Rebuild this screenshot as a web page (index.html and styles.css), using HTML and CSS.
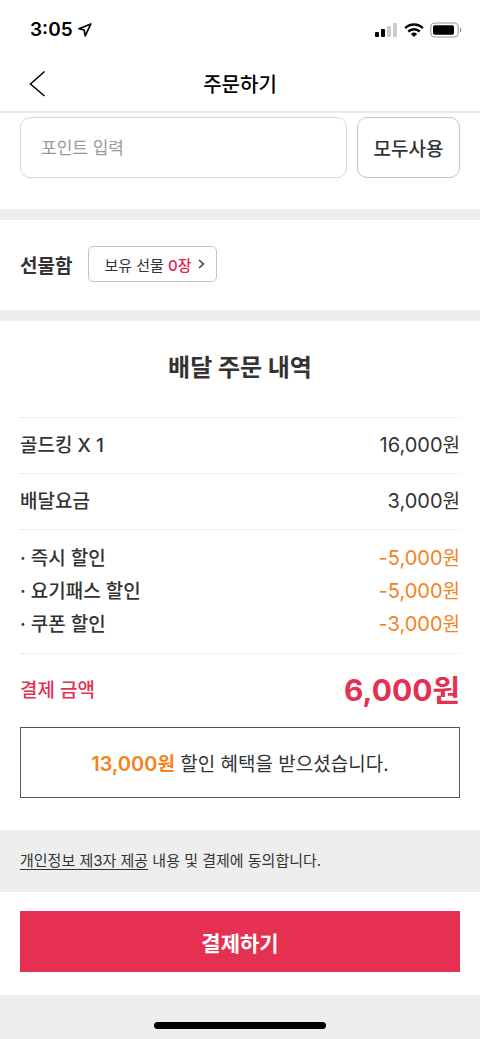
FILE: index.html
```html
<!DOCTYPE html>
<html lang="ko">
<head>
<meta charset="utf-8">
<meta name="viewport" content="width=device-width, initial-scale=1">
<title>주문하기</title>
<link rel="stylesheet" href="styles.css">
</head>
<body>
<div class="status">
  <div class="status-time">
    <span>3:05</span>
    <svg width="14" height="14" viewBox="0 0 14 14" aria-hidden="true"><path d="M1 5.700 12.800 1 7.200 12.800 6.200 7Z" fill="none" stroke="#000" stroke-width="1.700" stroke-linejoin="round"/></svg>
  </div>
  <div class="status-icons">
    <svg width="23" height="14" viewBox="0 0 23 14" aria-hidden="true"><rect x="0" y="9" width="4" height="5" rx="1"/><rect x="6" y="6" width="4" height="8" rx="1"/><rect x="12" y="3" width="4" height="11" rx="1" fill="#ccc"/><rect x="18" y="0" width="4" height="14" rx="1" fill="#ccc"/></svg>
    <svg width="20" height="14" viewBox="0 0 20 14" aria-hidden="true"><g fill="none" stroke="#000" stroke-width="2.500"><path d="M1.200 5.200a12.600 12.600 0 0 1 17.600 0"/><path d="M4.300 8.500a8.200 8.200 0 0 1 11.400 0"/></g><path d="M10 14 6.900 10.900a4.500 4.500 0 0 1 6.200 0Z"/></svg>
    <svg width="32" height="16" viewBox="0 0 32 16" aria-hidden="true"><rect x=".8" y="1" width="27.400" height="14" rx="4" fill="none" stroke="#999" stroke-width="1.100"/><rect x="3" y="3.200" width="21" height="9.600" rx="1.800"/><path d="M30 5.600c1.600.6 1.600 4.200 0 4.800Z" fill="#888"/></svg>
  </div>
</div>
<header class="header">
  <button class="back" type="button" aria-label="뒤로"><svg width="17" height="27" viewBox="0 0 17 27" aria-hidden="true"><path d="M15.500 1.500 1.500 14 15.500 26" fill="none" stroke="#000" stroke-width="1.500"/></svg></button>
  <h1 class="header-title">주문하기</h1>
</header>
<main>
  <section class="points">
    <input class="points-input" type="text" placeholder="포인트 입력" aria-label="포인트 입력">
    <button class="points-all" type="button">모두사용</button>
  </section>
  <section class="gifts">
    <h2 class="gifts-title">선물함</h2>
    <button class="gifts-button" type="button"><span>보유 선물 <b class="gifts-count">0장</b></span><svg width="7" height="10" viewBox="0 0 7 10" aria-hidden="true"><path d="M1 1 5.500 5 1 9" fill="none" stroke="#333" stroke-width="1.300"/></svg></button>
  </section>
  <section class="order">
    <h2 class="order-title">배달 주문 내역</h2>
    <dl class="lines">
      <div class="line"><dt>골드킹 X 1</dt><dd>16,000<span class="won">원</span></dd></div>
    </dl>
    <dl class="lines">
      <div class="line"><dt>배달요금</dt><dd>3,000<span class="won">원</span></dd></div>
    </dl>
    <dl class="lines discounts">
      <div class="line"><dt>· 즉시 할인</dt><dd>-5,000<span class="won">원</span></dd></div>
      <div class="line"><dt>· 요기패스 할인</dt><dd>-5,000<span class="won">원</span></dd></div>
      <div class="line"><dt>· 쿠폰 할인</dt><dd>-3,000<span class="won">원</span></dd></div>
    </dl>
    <dl class="lines total">
      <div class="line"><dt>결제 금액</dt><dd>6,000원</dd></div>
    </dl>
    <p class="benefit"><span><b class="benefit-sum">13,000<span class="won">원</span></b> 할인 혜택을 받으셨습니다.</span></p>
  </section>
  <p class="agree"><a class="agree-link" href="#">개인정보 제3자 제공</a> 내용 및 결제에 동의합니다.</p>
  <div class="pay"><button class="pay-button" type="button">결제하기</button></div>
</main>
<footer class="home"><div class="home-bar"></div></footer>
</body>
</html>
```
FILE: styles.css
```css
* { box-sizing: border-box; }
body, h1, h2, p, dl, dd { margin: 0; }
body {
  min-height: 100vh;
  display: flex;
  flex-direction: column;
  background: #fff;
  color: #333;
  font-family: Inter, "Noto Sans CJK KR", sans-serif;
  font-size: 19px;
}
button, input { font: inherit; color: inherit; background: #fff; padding: 0; }
button { cursor: pointer; }
svg { display: block; flex: none; }

.status {
  height: 56px;
  padding: 3px 18px 0 30px;
  display: flex;
  align-items: center;
  justify-content: space-between;
  color: #000;
}
.status-time { display: flex; align-items: center; gap: 5px; font-weight: 600; }
.status-icons { display: flex; align-items: center; gap: 6px; }

.header {
  height: 57px;
  padding: 0 20px;
  display: grid;
  grid-template-columns: 40px 1fr 40px;
  align-items: center;
  border-bottom: 2px solid #eaeaea;
  color: #000;
}
.back { height: 44px; padding-left: 9px; border: 0; }
.header-title { font-size: 20px; font-weight: 500; text-align: center; }

.points { display: flex; gap: 10px; padding: 4px 20px 31px; border-bottom: 11px solid #eee; }
.points-input {
  flex: 1;
  min-width: 0;
  height: 61px;
  padding: 0 20px;
  border: 1px solid #d8d8d8;
  border-radius: 10px;
  font-size: 17px;
}
.points-input::placeholder { color: #999; opacity: 1; }
.points-all { width: 103px; border: 1px solid #c4c4c4; border-radius: 10px; font-weight: 500; }

.gifts {
  display: flex;
  align-items: center;
  gap: 16px;
  padding: 26px 20px 28px;
  border-bottom: 11px solid #eee;
}
.gifts-title { font-size: 19px; font-weight: 700; }
.gifts-button {
  height: 36px;
  padding: 0 11px 0 15px;
  display: flex;
  align-items: center;
  gap: 6px;
  border: 1px solid #c4c4c4;
  border-radius: 5px;
  font-size: 15px;
}
.gifts-count { font-weight: 500; color: #e61e50; }

.order { padding: 29px 20px 32px; }
.order-title {
  margin-bottom: 31px;
  font-size: 24px;
  line-height: 36px;
  font-weight: 700;
  text-align: center;
}
.lines { padding: 11px 0; border-top: 1px dotted #ddd; }
.line { display: flex; align-items: center; justify-content: space-between; line-height: 33px; }
.line dt { font-weight: 500; }
.line dd { font-size: 20px; }
.won { font-size: 19px; }
.discounts { padding: 12px 0; }
.discounts dd { color: #f58220; }
.total { padding: 20px 0; color: #e53052; }
.total dd { font-size: 30px; font-weight: 700; }
.benefit {
  min-height: 71px;
  padding: 10px;
  display: flex;
  align-items: center;
  justify-content: center;
  border: 1px solid #555;
}
.benefit-sum { font-size: 20px; font-weight: 600; color: #f58220; }

.agree { padding: 19px 20px; background: #eee; font-size: 15px; line-height: 24px; }
.agree-link { color: inherit; text-underline-offset: 3px; }
.pay { padding: 19px 20px 23px; }
.pay-button {
  width: 100%;
  height: 61px;
  border: 0;
  background: #e53052;
  color: #fff;
  font-size: 21px;
  font-weight: 700;
}
.home {
  flex: 1;
  min-height: 44px;
  padding-bottom: 10px;
  display: flex;
  align-items: flex-end;
  justify-content: center;
  background: #eee;
}
.home-bar { width: 36%; height: 7px; border-radius: 4px; background: #000; }
```
